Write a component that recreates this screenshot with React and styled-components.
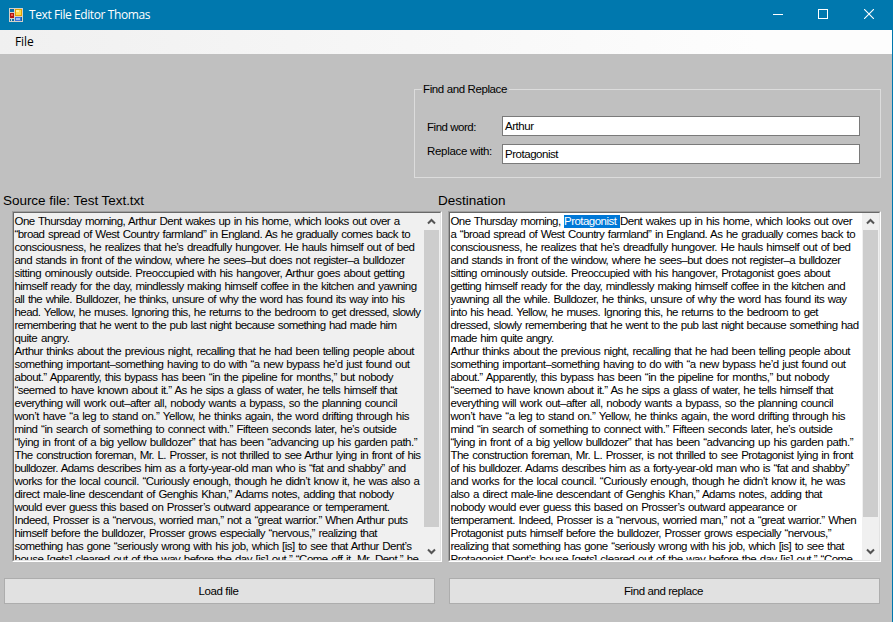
import React, { useLayoutEffect, useRef, useState } from "react";
import styled, { createGlobalStyle } from "styled-components";

const GlobalStyle = createGlobalStyle`
  * { box-sizing: border-box; }
  body { margin: 0; background: #c0c0c0; overflow: hidden; }
`;

const Window = styled.div`
  width: 893px;
  height: 622px;
  display: flex;
  flex-direction: column;
  background: #c0c0c0;
  border-right: 1px solid #0078ae;
  font: 11.5px/13px "Liberation Sans", Arial, sans-serif;
  color: #000;
  overflow: hidden;
`;

const TitleBar = styled.header`
  height: 30px;
  flex: none;
  display: flex;
  align-items: center;
  padding-left: 9px;
  background: #0078ae;
  color: #fff;
  font: 12px/16px "Open Sans", "Noto Sans", sans-serif;
`;

const Title = styled.h1`
  flex: 1;
  margin: 0 0 0 6px;
  font: inherit;
`;

const WindowButton = styled.button`
  width: ${(p) => p.$width || 46}px;
  height: 30px;
  padding: 0 0 2px;
  border: 0;
  display: grid;
  place-items: center;
  background: transparent;
  color: #fff;
`;

const MenuBar = styled.nav`
  height: 24px;
  flex: none;
  display: flex;
  align-items: center;
  padding-left: 15px;
  background: linear-gradient(90deg, #f0f0f0, #fdfdfd 85%);
  font: 12px/16px "Open Sans", "Noto Sans", sans-serif;
`;

const SearchGroup = styled.fieldset`
  width: 467px;
  height: 95px;
  margin: 29px 0 0 414px;
  padding: 0 20px 0 12px;
  border: 1px solid #dcdcdc;
  min-width: 0;
`;

const Legend = styled.legend`
  padding: 0 2px 0 1px;
  margin-left: -5px;
  height: 13px;
`;

const SearchRow = styled.div`
  display: flex;
  margin-top: ${(p) => p.$top}px;
  height: 20px;
`;

const Label = styled.label`
  width: 75px;
  padding-top: ${(p) => p.$drop}px;
`;

const TextBox = styled.div`
  flex: 1;
  height: 20px;
  padding: 3px 0 0 2px;
  border: 1px solid #7a7a7a;
  background: #fff;
`;

const Panes = styled.main`
  display: flex;
  gap: 7px;
  margin-top: 15px;
`;

const Pane = styled.section`
  width: ${(p) => p.$width}px;
  flex: none;
`;

const PaneTitle = styled.h2`
  margin: 0 0 3px ${(p) => p.$left}px;
  font: 13.5px/15px "Liberation Sans", Arial, sans-serif;
`;

const Editor = styled.div`
  height: 351px;
  margin-left: ${(p) => p.$left}px;
  display: flex;
  border: 1px solid;
  border-color: #a0a0a0 #fff #fff #a0a0a0;
  background: ${(p) => (p.$readOnly ? "#f0f0f0" : "#fff")};
`;

const EditorInner = styled.div`
  flex: 1;
  display: flex;
  border: 1px solid;
  border-color: #696969 #e3e3e3 #e3e3e3 #696969;
  overflow: hidden;
`;

const Page = styled.div`
  flex: 1;
  min-width: 0;
  padding: 2px 0 0 0.5px;
  word-spacing: 0.9px;
  overflow: hidden;
`;

const Line = styled.div`
  height: 13px;
  white-space: pre;
`;

const Fitted = styled.span`
  display: inline-block;
  white-space: pre;
`;

const Selection = styled.span`
  display: inline-block;
  height: 13px;
  background: #0078d7;
  color: #fff;
`;

const ScrollBar = styled.div`
  width: 17px;
  flex: none;
  display: flex;
  flex-direction: column;
  align-items: center;
  justify-content: space-between;
  padding: 0 1px;
  background: #f0f0f0;
`;

const Thumb = styled.div`
  width: 15px;
  height: ${(p) => p.$height}px;
  margin-bottom: auto;
  background: #cdcdcd;
`;

const ArrowBox = styled.div`
  width: 15px;
  height: 17px;
  display: grid;
  place-items: center;
`;

const Actions = styled.footer`
  display: flex;
  gap: 14px;
  margin: 16px 0 0 4px;
`;

const PushButton = styled.button`
  width: 431px;
  height: 26px;
  padding: 0 2px 0 0;
  border: 1px solid #adadad;
  background: #e1e1e1;
  color: #000;
  font: inherit;
`;

// Spreads the letters so that the text takes exactly `width` pixels.
function Fit({ width, children }) {
  const ref = useRef(null);
  const [spacing, setSpacing] = useState(0);
  useLayoutEffect(() => {
    const natural = ref.current.getBoundingClientRect().width;
    setSpacing((width - natural) / children.length);
  }, []);
  return (
    <Fitted ref={ref} style={{ letterSpacing: `${spacing}px` }}>
      {children}
    </Fitted>
  );
}

const sourceLines = [
  ["One Thursday morning, Arthur Dent wakes up in his home, which looks out over a", 385],
  ["“broad spread of West Country farmland” in England. As he gradually comes back to", 395.5],
  ["consciousness, he realizes that he’s dreadfully hungover. He hauls himself out of bed", 400],
  ["and stands in front of the window, where he sees–but does not register–a bulldozer", 390],
  ["sitting ominously outside. Preoccupied with his hangover, Arthur goes about getting", 390],
  ["himself ready for the day, mindlessly making himself coffee in the kitchen and yawning", 402],
  ["all the while. Bulldozer, he thinks, unsure of why the word has found its way into his", 390],
  ["head. Yellow, he muses. Ignoring this, he returns to the bedroom to get dressed, slowly", 406],
  ["remembering that he went to the pub last night because something had made him", 382],
  ["quite angry.", 55],
  ["Arthur thinks about the previous night, recalling that he had been telling people about", 399.5],
  ["something important–something having to do with “a new bypass he’d just found out", 395],
  ["about.” Apparently, this bypass has been “in the pipeline for months,” but nobody", 378.5],
  ["“seemed to have known about it.” As he sips a glass of water, he tells himself that", 382.5],
  ["everything will work out–after all, nobody wants a bypass, so the planning council", 382.5],
  ["won’t have “a leg to stand on.” Yellow, he thinks again, the word drifting through his", 394.5],
  ["mind “in search of something to connect with.” Fifteen seconds later, he’s outside", 382],
  ["“lying in front of a big yellow bulldozer” that has been “advancing up his garden path.”", 402.5],
  ["The construction foreman, Mr. L. Prosser, is not thrilled to see Arthur lying in front of his", 406],
  ["bulldozer. Adams describes him as a forty-year-old man who is “fat and shabby” and", 391],
  ["works for the local council. “Curiously enough, though he didn’t know it, he was also a", 405],
  ["direct male-line descendant of Genghis Khan,” Adams notes, adding that nobody", 379],
  ["would ever guess this based on Prosser’s outward appearance or temperament.", 375],
  ["Indeed, Prosser is a “nervous, worried man,” not a “great warrior.” When Arthur puts", 393],
  ["himself before the bulldozer, Prosser grows especially “nervous,” realizing that", 362.5],
  ["something has gone “seriously wrong with his job, which [is] to see that Arthur Dent’s", 397],
  ["house [gets] cleared out of the way before the day [is] out.” “Come off it, Mr. Dent,” he", 404],
];

const destinationLines = [
  ["a “broad spread of West Country farmland” in England. As he gradually comes back to", 404.5],
  ["consciousness, he realizes that he’s dreadfully hungover. He hauls himself out of bed", 400],
  ["and stands in front of the window, where he sees–but does not register–a bulldozer", 390],
  ["sitting ominously outside. Preoccupied with his hangover, Protagonist goes about", 379.5],
  ["getting himself ready for the day, mindlessly making himself coffee in the kitchen and", 394.5],
  ["yawning all the while. Bulldozer, he thinks, unsure of why the word has found its way", 396],
  ["into his head. Yellow, he muses. Ignoring this, he returns to the bedroom to get", 367.5],
  ["dressed, slowly remembering that he went to the pub last night because something had", 408],
  ["made him quite angry.", 103],
  ["Arthur thinks about the previous night, recalling that he had been telling people about", 399.5],
  ["something important–something having to do with “a new bypass he’d just found out", 395],
  ["about.” Apparently, this bypass has been “in the pipeline for months,” but nobody", 378.5],
  ["“seemed to have known about it.” As he sips a glass of water, he tells himself that", 382.5],
  ["everything will work out–after all, nobody wants a bypass, so the planning council", 382.5],
  ["won’t have “a leg to stand on.” Yellow, he thinks again, the word drifting through his", 394.5],
  ["mind “in search of something to connect with.” Fifteen seconds later, he’s outside", 382],
  ["“lying in front of a big yellow bulldozer” that has been “advancing up his garden path.”", 402.5],
  ["The construction foreman, Mr. L. Prosser, is not thrilled to see Protagonist lying in front", 402.5],
  ["of his bulldozer. Adams describes him as a forty-year-old man who is “fat and shabby”", 398.5],
  ["and works for the local council. “Curiously enough, though he didn’t know it, he was", 394.5],
  ["also a direct male-line descendant of Genghis Khan,” Adams notes, adding that", 371.5],
  ["nobody would ever guess this based on Prosser’s outward appearance or", 346],
  ["temperament. Indeed, Prosser is a “nervous, worried man,” not a “great warrior.” When", 405.5],
  ["Protagonist puts himself before the bulldozer, Prosser grows especially “nervous,”", 380.5],
  ["realizing that something has gone “seriously wrong with his job, which [is] to see that", 393.5],
  ["Protagonist Dent’s house [gets] cleared out of the way before the day [is] out.” “Come", 402],
];

function AppIcon() {
  return (
    <svg width="14" height="14" viewBox="0 0 14 14" shapeRendering="crispEdges">
      <path fill="#d4d0c8" d="M0 0h14v14H0z" />
      <path fill="#0b6aa6" d="M1 1h4v3H1zM1 11h1v2H1zM3 11h2v2H3zM12 9h1v4h-1z" />
      <path fill="#b01212" d="M1 5h4v5H1z" />
      <path fill="#f25a4a" d="M2 6h2v2H2z" />
      <path fill="#e0a000" d="M6 1h7v7H6z" />
      <path fill="#ffd94a" d="M7 2h5v5H7z" />
      <path fill="#fff0a0" d="M7 2h3v2H7z" />
      <path fill="#3b6fd6" d="M6 9h6v4H6z" />
      <path fill="#9dbcf5" d="M7 10h4v2H7z" />
    </svg>
  );
}

function Arrow({ down }) {
  return (
    <svg width="9" height="7" viewBox="0 0 9 7">
      <path
        d={down ? "M1 1.5 4.5 5 8 1.5" : "M1 5.5 4.5 2 8 5.5"}
        fill="none"
        stroke="#555"
        strokeWidth="2"
      />
    </svg>
  );
}

function Scroll({ height }) {
  return (
    <ScrollBar>
      <ArrowBox><Arrow /></ArrowBox>
      <Thumb $height={height} />
      <ArrowBox><Arrow down /></ArrowBox>
    </ScrollBar>
  );
}

function Lines({ lines }) {
  return lines.map(([text, width]) => (
    <Line key={text}><Fit width={width}>{text}</Fit></Line>
  ));
}

export default function App() {
  return (
    <Window>
      <GlobalStyle />
      <TitleBar>
        <AppIcon />
        <Title><Fit width={121}>Text File Editor Thomas</Fit></Title>
        <WindowButton $width={44} aria-label="Minimize">
          <svg width="10" height="10" shapeRendering="crispEdges"><path d="M0 5.5h10" stroke="#fff" /></svg>
        </WindowButton>
        <WindowButton aria-label="Maximize">
          <svg width="10" height="10" shapeRendering="crispEdges"><path d="M.5.5h9v9h-9z" fill="none" stroke="#fff" /></svg>
        </WindowButton>
        <WindowButton aria-label="Close">
          <svg width="10" height="10"><path d="M0 0l10 10M10 0L0 10" stroke="#fff" strokeWidth="1.1" /></svg>
        </WindowButton>
      </TitleBar>
      <MenuBar><Fit width={18.5}>File</Fit></MenuBar>
      <SearchGroup>
        <Legend><Fit width={84}>Find and Replace</Fit></Legend>
        <SearchRow $top={20}>
          <Label $drop={5}><Fit width={49}>Find word:</Fit></Label>
          <TextBox><Fit width={28.5}>Arthur</Fit></TextBox>
        </SearchRow>
        <SearchRow $top={8}>
          <Label $drop={1}><Fit width={65}>Replace with:</Fit></Label>
          <TextBox><Fit width={53}>Protagonist</Fit></TextBox>
        </SearchRow>
      </SearchGroup>
      <Panes>
        <Pane $width={442}>
          <PaneTitle $left={3}><Fit width={141}>Source file: Test Text.txt</Fit></PaneTitle>
          <Editor $left={12} $readOnly>
            <EditorInner>
              <Page><Lines lines={sourceLines} /></Page>
              <Scroll height={297} />
            </EditorInner>
          </Editor>
        </Pane>
        <Pane $width={432}>
          <PaneTitle $left={-11}><Fit width={67.5}>Destination</Fit></PaneTitle>
          <Editor $left={-1}>
            <EditorInner>
              <Page>
                <Line>
                  <Fit width={113.5}>{"One Thursday morning, "}</Fit>
                  <Selection><Fit width={56}>{"Protagonist "}</Fit></Selection>
                  <Fit width={232}>Dent wakes up in his home, which looks out over</Fit>
                </Line>
                <Lines lines={destinationLines} />
              </Page>
              <Scroll height={287} />
            </EditorInner>
          </Editor>
        </Pane>
      </Panes>
      <Actions>
        <PushButton><Fit width={40}>Load file</Fit></PushButton>
        <PushButton><Fit width={79}>Find and replace</Fit></PushButton>
      </Actions>
    </Window>
  );
}
